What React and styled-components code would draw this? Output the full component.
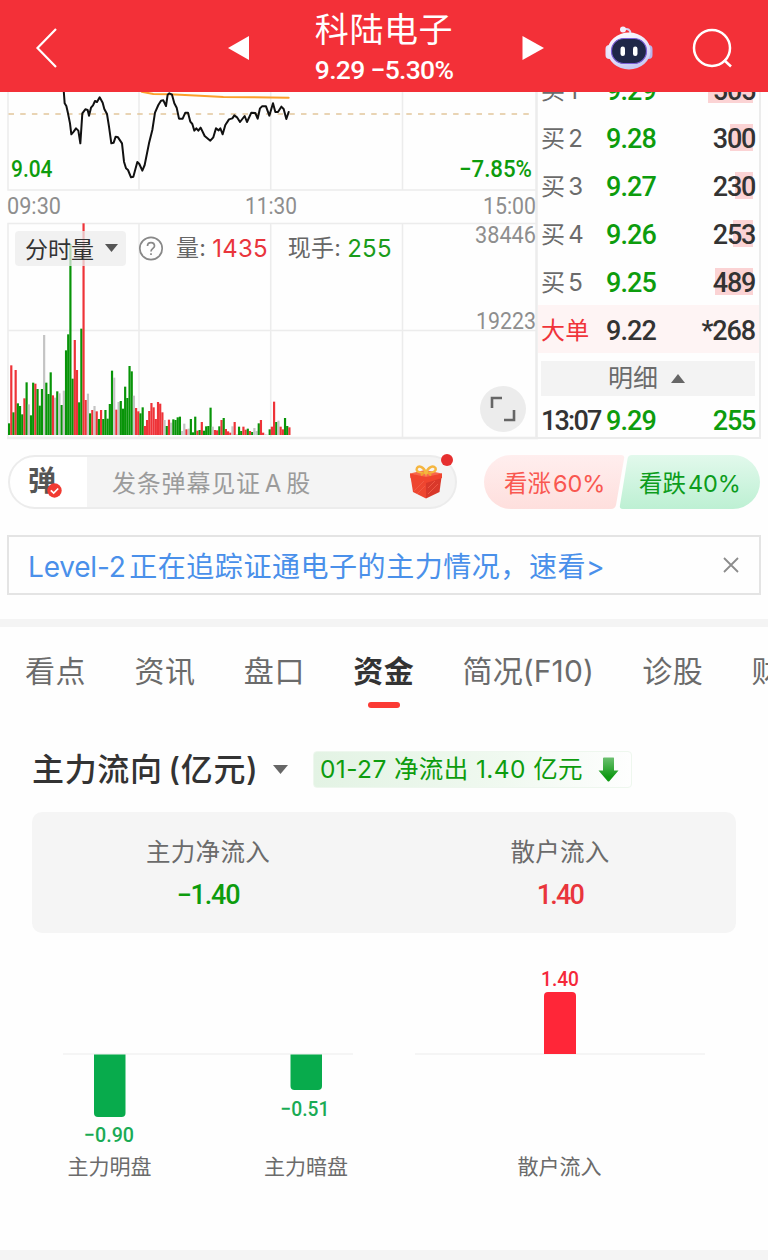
import React from "react";
import styled, { createGlobalStyle } from "styled-components";

const UI = `"Inter", "Noto Sans CJK SC", sans-serif`;
const DIN = `"Roboto", "Noto Sans CJK SC", sans-serif`;
const RED = "#e9353c";
const GREEN = "#0d9c0d";

const GlobalStyle = createGlobalStyle`
  * { box-sizing: border-box; }
  body { margin: 0; background: #fefefe; font-family: ${UI}; color: #333; overflow: hidden; }
  svg { display: block; flex: none; overflow: visible; }
`;

const Page = styled.div`
  width: 768px;
  height: 1260px;
  overflow: hidden;
  display: flex;
  flex-direction: column;
`;

const Num = styled.span`
  font-family: ${DIN};
  font-weight: ${(p) => p.$weight || 500};
  font-size: ${(p) => p.$size || 27}px;
  letter-spacing: ${(p) => p.$ls || 0}px;
  color: ${(p) => p.$color || "inherit"};
  white-space: pre;
`;

/* ---------- header ---------- */

const Header = styled.header`
  position: relative;
  z-index: 1;
  height: 92px;
  flex: none;
  background: #f33038;
  color: #fff;
  display: flex;
  align-items: center;
  padding: 4px 0 0 36px;
`;
const BackIcon = styled.svg`margin-right: 171px;`;
const RobotIcon = styled.svg`margin-left: 61px;`;
const SearchIcon = styled.svg`margin-left: 39px;`;
const TitleBlock = styled.div`
  width: 273px;
  height: 88px;
  display: flex;
  flex-direction: column;
  align-items: center;
  margin-top: -4px;
`;
const StockName = styled.div`
  font-size: 34px;
  letter-spacing: 0.6px;
  line-height: 44px;
  margin-top: 6px;
  padding-right: 3px;
`;
const StockQuote = styled(Num)`
  line-height: 30px;
  margin-top: 3px;
  padding-right: 3px;
`;

/* ---------- market panel ---------- */

const Market = styled.section`
  height: 347px;
  flex: none;
  display: flex;
`;
const ChartPane = styled.div`
  position: relative;
  width: 538px;
`;
const ChartTools = styled.div`
  position: absolute;
  left: 15px;
  top: 138px;
  height: 36px;
  display: flex;
  align-items: center;
  font-size: 23px;
  color: #666;
  white-space: nowrap;
`;
const Picker = styled.div`
  width: 111px;
  height: 35px;
  border-radius: 4px;
  background: rgba(236, 236, 236, 0.75);
  color: #333;
  display: flex;
  align-items: center;
  gap: 11px;
  padding-left: 10px;
  margin-right: 13px;
`;
const Caption = styled.span`
  margin-left: ${(p) => p.$ml}px;
  margin-right: 6px;
  line-height: 35px;
  letter-spacing: 0.3px;
`;
const ToolValue = styled.span`
  color: ${(p) => p.$color};
  font-size: 24px;
  letter-spacing: 0.2px;
`;
const ExpandButton = styled.div`
  position: absolute;
  left: 480px;
  top: 294px;
  width: 46px;
  height: 46px;
  border-radius: 50%;
  background: #ececec;
  display: grid;
  place-items: center;
`;

const Book = styled.div`
  width: 223px;
  border-right: 2px solid #ececec;
  border-bottom: 2px solid #ececec;
  overflow: hidden;
  display: flex;
  flex-direction: column;
`;
const BookRow = styled.div`
  flex: none;
  height: 48px;
  display: grid;
  grid-template-columns: 65px 1fr auto;
  align-items: center;
  padding: 3px 4px 0 3px;
  background: ${(p) => (p.$big ? "#fef4f4" : "transparent")};
  &:first-child { margin-top: -27px; }
`;
const Side = styled.span`
  font-size: 24px;
  margin-top: -5px;
  white-space: pre;
  word-spacing: -4px;
  letter-spacing: 0.2px;
  color: ${(p) => (p.$big ? "#f0343a" : "#6b6b6b")};
`;
const Qty = styled(Num)`
  position: relative;
  text-align: right;
  z-index: 0;
  &::before {
    content: "";
    position: absolute;
    z-index: -1;
    right: 2px;
    top: 1px;
    height: 27px;
    width: ${(p) => p.$bar || 0}px;
    background: #fbd3d4;
  }
`;
const DetailBar = styled.div`
  flex: none;
  height: 35px;
  margin: 8px 4px 0 3px;
  background: #f3f3f3;
  color: #6b6b6b;
  font-size: 25px;
  line-height: 30px;
  display: flex;
  align-items: center;
  justify-content: center;
  gap: 13px;
  padding-right: 3px;
`;
const DetailLabel = styled.span`margin-top: -1px;`;
const TradeRow = styled.div`
  flex: none;
  height: 48px;
  display: grid;
  grid-template-columns: 65px 1fr auto;
  align-items: center;
  padding: 2px 4px 0 3px;
  color: #333;
`;

/* ---------- comments and votes ---------- */

const Social = styled.section`
  height: 54px;
  flex: none;
  margin: 16px 8px 0;
  display: flex;
`;
const Danmu = styled.div`
  position: relative;
  width: 449px;
  height: 54px;
  border: 2px solid #ececec;
  border-radius: 27px;
  background: linear-gradient(90deg, #fff 77px, #f4f4f4 77px);
  display: flex;
  align-items: center;
`;
const DanmuMark = styled.div`
  position: relative;
  width: 102px;
  padding-left: 18px;
  font-size: 28px;
  font-weight: 700;
  line-height: 46px;
  margin-top: -3px;
  color: #555;
`;
const CheckBadge = styled.svg`
  position: absolute;
  left: 37px;
  top: 25px;
`;
const Placeholder = styled.div`
  width: 297px;
  margin-top: -2px;
  font-size: 24px;
  letter-spacing: 0.8px;
  word-spacing: -3.5px;
  color: #9b9b9b;
`;
const AlertDot = styled.i`
  position: absolute;
  left: 431px;
  top: -3px;
  width: 12px;
  height: 12px;
  border-radius: 50%;
  background: #e62f2f;
`;
const Votes = styled.div`
  position: relative;
  margin-left: 27px;
  width: 276px;
  height: 54px;
`;
const VoteShapes = styled.svg`position: absolute; left: 0; top: 0;`;
const VoteLabels = styled.div`
  position: relative;
  display: flex;
  height: 54px;
  align-items: center;
  gap: 7px;
  font-size: 23.5px;
  padding-left: 20px;
`;
const Vote = styled.span`
  width: ${(p) => p.$w}px;
  color: ${(p) => p.$color};
  white-space: nowrap;
`;
const Pct = styled.span`
  font-size: 23.5px;
  margin-left: 2px;
  letter-spacing: -0.1px;
`;

const Notice = styled.section`
  flex: none;
  height: 60px;
  margin: 26px 7px 0;
  border: 2px solid #e4e4e4;
  display: flex;
  align-items: center;
  justify-content: space-between;
  padding: 0 20px 0 19px;
  font-size: 28px;
  letter-spacing: 0.55px;
  color: #4a90ea;
  white-space: nowrap;
`;
const NoticeText = styled.span`margin-top: -1px;`;
const NoticeProduct = styled.span`
  letter-spacing: -0.2px;
  word-spacing: -4px;
`;
const Band = styled.div`
  flex: none;
  height: ${(p) => p.$h}px;
  margin-top: ${(p) => p.$mt}px;
  background: #f4f4f4;
`;

/* ---------- tabs ---------- */

const Tabs = styled.nav`
  flex: none;
  height: 88px;
  display: flex;
  gap: 48.2px;
  padding-left: 25px;
  overflow: hidden;
`;
const Tab = styled.div`
  flex: none;
  height: 82px;
  display: flex;
  flex-direction: column;
  align-items: center;
  font-size: 30px;
  line-height: 44px;
  padding-top: 22px;
  letter-spacing: ${(p) => (p.$latin ? 0.1 : 0.6)}px;
  font-weight: ${(p) => (p.$active ? 700 : 400)};
  color: ${(p) => (p.$active ? "#333" : "#6b6b6b")};
  &::after {
    content: "";
    flex: none;
    width: 32px;
    height: 6px;
    margin-top: 9px;
    border-radius: 3px;
    background: ${(p) => (p.$active ? "#fb3a34" : "transparent")};
  }
`;

/* ---------- fund flow ---------- */

const FlowHead = styled.div`
  flex: none;
  height: 38px;
  margin: 35px 0 0 32px;
  display: flex;
  align-items: center;
`;
const FlowTitle = styled.h2`
  margin: 0;
  width: 241px;
  font-size: 32px;
  line-height: 38px;
  letter-spacing: 0.65px;
  word-spacing: -3.5px;
  font-weight: 500;
  white-space: nowrap;
  padding-top: 2px;
`;
const FlowTag = styled.div`
  margin-left: 25px;
  width: 319px;
  height: 37px;
  border: 1px solid #eef7ee;
  border-radius: 4px;
  background: linear-gradient(90deg, #e3f3e4, #f0f9f0 60%, #fefefe);
  color: ${GREEN};
  font-size: 24.5px;
  letter-spacing: 0.4px;
  padding: 0 12px 0 6px;
  display: flex;
  align-items: center;
  justify-content: space-between;
  white-space: nowrap;
`;
const FlowTagText = styled.span`
  line-height: 32px;
`;
const Summary = styled.div`
  flex: none;
  height: 121px;
  margin: 24px 32px 0;
  border-radius: 10px;
  background: #f5f5f5;
  display: grid;
  grid-template-columns: 1fr 1fr;
`;
const Metric = styled.div`
  display: flex;
  flex-direction: column;
  align-items: center;
  padding-top: 22px;
  font-size: 24.5px;
  line-height: 36px;
  letter-spacing: 0.3px;
  color: #6b6b6b;
`;
const MetricValue = styled(Num)`
  line-height: 34px;
  margin-top: 8px;
`;
const FlowChart = styled.svg`
  margin-top: 27px;
`;

/* ---------- data ---------- */

const VOLUME =
  "g35 r209 g68 r195 g95 g87 g62 r110 g158 n92 g59 g157 r154 g138 g88 g138 n300 g157 g123 g188 r119 n112 g131 n125 g90 n133 g254 g302 g573 g169 r285 r195 g98 g319 r635 r105 n124 g65 r75 n87 r71 g48 r75 g48 g75 g49 g93 g193 n172 r76 n99 g102 g79 g145 g111 g207 g191 n118 r81 r71 g65 g83 r27 r45 r72 r96 r83 r48 r99 r94 r68 n45 g27 r46 n37 g47 g45 g53 g55 n12 n34 r17 n19 g48 g8 g55 r13 g15 r39 g13 g26 g27 g82 n25 r15 r14 g26 r45 g51 r18 r11 r7 n26 r39 n2 g25 g12 r25 r16 g19 r12 g9 n21 n12 g35 r45 r7 n2 n1 g17 r25 r100 g39 n43 r25 r17 g51 g27 r23"
    .split(" ")
    .map((s) => ({ tone: s[0], value: Number(s.slice(1)) }));
const TONES = { g: "#089408", r: "#ee3338", n: "#c4c4c4" };

const PRICE =
  "191,0 194,40 199,48 204,70 210,100 214,133 221,125 228,115 235,122 241,160 247,70 256,58 263,60 267,77 273,53 279,46 285,33 291,36 299,22 308,38 313,57 321,72 327,110 334,160 341,158 347,140 354,142 366,160 372,215 378,235 384,240 393,262 400,260 412,216 418,222 427,242 434,225 447,160 457,120 465,68 475,45 483,32 490,31 498,48 503,14 508,10 516,14 523,40 530,53 537,86 548,86 556,68 564,68 571,95 577,102 583,122 589,115 595,122 602,113 614,138 631,152 640,142 648,115 656,121 661,115 668,133 676,105 687,88 697,85 703,76 711,82 720,96 734,78 741,96 754,68 766,69 773,86 780,55 786,49 798,49 808,77 819,40 826,66 834,66 844,50 851,57 859,87 866,66";
const AVERAGE = "425,5 460,12 510,13 600,17 670,21 760,22 866,23";

const BIDS = [
  { side: "买 1", price: "9.29", qty: "505", bar: 45 },
  { side: "买 2", price: "9.28", qty: "300", bar: 23 },
  { side: "买 3", price: "9.27", qty: "230", bar: 18 },
  { side: "买 4", price: "9.26", qty: "253", bar: 20 },
  { side: "买 5", price: "9.25", qty: "489", bar: 38 },
];

const TABS = ["看点", "资讯", "盘口", "资金", "简况(F10)", "诊股", "财务"];

/* ---------- drawings ---------- */

function ChartText({ x, y, w, size = 24, color = "#8e8e8e", weight = 400, children }) {
  return (
    <text x={x} y={y} textLength={w} lengthAdjust="spacingAndGlyphs" fontFamily="Roboto, sans-serif" fontSize={size} fontWeight={weight} fill={color}>
      {children}
    </text>
  );
}

function IntradayChart() {
  return (
    <svg width="538" height="347" viewBox="0 0 538 347">
      <g stroke="#ececec" strokeWidth="1.5" fill="none">
        <path d="M8 0V98H537M139 0V98M270.7 0V98M402.5 0V98" />
        <path d="M537 131.5H8V346M139 132V345M270.7 132V345M402.5 132V345M8 238.5H537" />
        <path d="M7 346H538M536.5 0V347" strokeWidth="2.5" />
      </g>
      <path d="M8.500 22H535" stroke="#e2c69c" strokeWidth="1.3" strokeDasharray="5.500 6.200" />
      {VOLUME.map((bar, i) => (
        <rect key={i} x={8 + i * 2.19} y={343 - bar.value / 3} width="2.19" height={bar.value / 3} fill={TONES[bar.tone]} />
      ))}
      <g transform="translate(0 -2) scale(0.33333)" fill="none" strokeLinejoin="round" strokeLinecap="round">
        <polyline points={AVERAGE} stroke="#fba02c" strokeWidth="6" />
        <polyline points={PRICE} stroke="#111" strokeWidth="6" />
      </g>
      <ChartText x={11} y={85} w={41.5} weight={500} color={GREEN}>9.04</ChartText>
      <ChartText x={459} y={85} w={73} weight={500} color={GREEN}>−7.85%</ChartText>
      <ChartText x={7} y={122} w={54}>09:30</ChartText>
      <ChartText x={245} y={122} w={52}>11:30</ChartText>
      <ChartText x={483} y={122} w={53}>15:00</ChartText>
      <ChartText x={475} y={151} w={61}>38446</ChartText>
      <ChartText x={476} y={237} w={60}>19223</ChartText>
    </svg>
  );
}

function Robot() {
  return (
    <RobotIcon width="48" height="46" viewBox="0 0 48 46">
      <defs>
        <linearGradient id="shell" x1="0" y1="0" x2="0.4" y2="1">
          <stop offset="0" stopColor="#fff" />
          <stop offset="0.65" stopColor="#e4e0fa" />
          <stop offset="1" stopColor="#c9ccf2" />
        </linearGradient>
      </defs>
      <path d="M18.500 4.500C23 3 25.500 5 25.500 9" fill="none" stroke="#d9d6f4" strokeWidth="2" />
      <circle cx="18" cy="4.500" r="3" fill="#f2effd" />
      <rect x="0.500" y="20" width="8" height="14" rx="4" fill="#e6e3fb" />
      <rect x="39.500" y="20" width="8" height="14" rx="4" fill="#b9b4ea" />
      <ellipse cx="24" cy="26" rx="21.500" ry="18.500" fill="url(#shell)" />
      <rect x="6.500" y="13.500" width="35" height="25" rx="12.300" fill="#1f2748" stroke="#7a5fd6" strokeWidth="1.200" />
      <rect x="15.500" y="21.500" width="4.500" height="9.500" rx="2.200" fill="#fff" />
      <rect x="28" y="21.500" width="4.500" height="9.500" rx="2.200" fill="#fff" />
    </RobotIcon>
  );
}

function Gift() {
  return (
    <svg width="34" height="36" viewBox="0 0 34 36">
      <path d="M1 9.500L17 13V34.500L4 28Z" fill="#ee4630" />
      <path d="M33 9.500L17 13V34.500L30.500 28Z" fill="#d9382a" />
      <path d="M1 9.500L16 6L33 9.500L17 14Z" fill="#f8674b" />
      <path d="M1 9.500L17 13L33 9.500V14L17 19L1.500 14Z" fill="#f0452f" />
      <path d="M5 27L15 17M8 30L16 22M19 30L29 20M19 24L26 17" stroke="#f3604a" strokeWidth="0.800" />
      <path d="M17 9C12 9 6 8 8 4C10 1 15 3 17 9C19 3 24 1 26.500 4C28 8 22 9 17 9Z" fill="none" stroke="#f5b640" strokeWidth="2.400" />
      <path d="M15 8.500L12 11.500M19 8.500L22 11.500" stroke="#f0a52f" strokeWidth="2" />
    </svg>
  );
}

function Triangle({ w = 14, h = 9, up, color = "#666" }) {
  return (
    <svg width={w} height={h} viewBox="0 0 14 9" preserveAspectRatio="none">
      <path d={up ? "M0 9H14L7 0Z" : "M0 0H14L7 9Z"} fill={color} />
    </svg>
  );
}

function FlowBars() {
  return (
    <FlowChart width="768" height="290" viewBox="0 960 768 290">
      <path d="M63 1054H353M415 1054H705" stroke="#ececec" strokeWidth="1.200" />
      <path d="M94 1054.500h31.500V1113a4 4 0 0 1-4 4h-23.500a4 4 0 0 1-4-4Z" fill="#08ab4c" />
      <path d="M290.500 1054.500H322V1086a4 4 0 0 1-4 4h-23.500a4 4 0 0 1-4-4Z" fill="#08ab4c" />
      <path d="M544 1054V996a4 4 0 0 1 4-4h24a4 4 0 0 1 4 4v58Z" fill="#ff2638" />
      <ChartText x={84} y={1142} w={50} size={21} weight={500} color="#1aab55">−0.90</ChartText>
      <ChartText x={280.5} y={1115.500} w={49} size={21} weight={500} color="#1aab55">−0.51</ChartText>
      <ChartText x={541} y={986} w={38} size={21} weight={500} color="#f5283a">1.40</ChartText>
      <g fontFamily='"Noto Sans CJK SC", sans-serif' fontSize="21" fill="#6b6b6b" textAnchor="middle">
        <text x="109.500" y="1173.500">主力明盘</text>
        <text x="306" y="1173.500">主力暗盘</text>
        <text x="559.500" y="1173.500">散户流入</text>
      </g>
    </FlowChart>
  );
}

/* ---------- page ---------- */

export default function App() {
  return (
    <Page>
      <GlobalStyle />
      <Header>
        <BackIcon width="21" height="40" viewBox="0 0 21 40">
          <path d="M20 1L1.500 20L20 39" fill="none" stroke="#fff" strokeWidth="2.200" />
        </BackIcon>
        <svg width="21" height="24" viewBox="0 0 21 24"><path d="M21 0V24L0 12Z" fill="#fff" /></svg>
        <TitleBlock>
          <StockName>科陆电子</StockName>
          <StockQuote $size={26.5} $ls={-0.7}>9.29 −5.30%</StockQuote>
        </TitleBlock>
        <svg width="22" height="24" viewBox="0 0 22 24"><path d="M0.500 0V24L22 12Z" fill="#fff" /></svg>
        <Robot />
        <SearchIcon width="40" height="40" viewBox="0 0 40 40">
          <circle cx="20" cy="20" r="18" fill="none" stroke="#fff" strokeWidth="2.500" />
          <path d="M32 32L39 38.500" stroke="#fff" strokeWidth="2.500" />
        </SearchIcon>
      </Header>

      <Market>
        <ChartPane>
          <IntradayChart />
          <ChartTools>
            <Picker>
              分时量
              <Triangle w={13} h={8} color="#555" />
            </Picker>
            <svg width="25" height="25" viewBox="0 0 25 25">
              <circle cx="12" cy="12.500" r="11.200" fill="none" stroke="#888" strokeWidth="1.700" />
              <path d="M8.500 10C8.500 5.500 15.500 5.500 15.500 10C15.500 12.500 12 12.300 12 15.500M12 17.300V19" fill="none" stroke="#888" strokeWidth="1.700" />
            </svg>
            <Caption $ml={12}>量:</Caption>
            <ToolValue $color={RED}>1435</ToolValue>
            <Caption $ml={20}>现手:</Caption>
            <ToolValue $color="#1a9c1a">255</ToolValue>
          </ChartTools>
          <ExpandButton>
            <svg width="26" height="26" viewBox="0 0 26 26">
              <path d="M2 12V2H12M24 14V24H14" fill="none" stroke="#666" strokeWidth="2.600" />
            </svg>
          </ExpandButton>
        </ChartPane>
        <Book>
          {BIDS.map((bid) => (
            <BookRow key={bid.side}>
              <Side>{bid.side}</Side>
              <Num $color={GREEN} $ls={-0.9}>{bid.price}</Num>
              <Qty $bar={bid.bar} $ls={-1.3} $color="#333">{bid.qty}</Qty>
            </BookRow>
          ))}
          <BookRow $big>
            <Side $big>大单</Side>
            <Num $color="#333" $ls={-0.9}>9.22</Num>
            <Qty $ls={-1.1} $color="#333">*268</Qty>
          </BookRow>
          <DetailBar>
            <DetailLabel>明细</DetailLabel>
            <Triangle up />
          </DetailBar>
          <TradeRow>
            <Num $ls={-1.8}>13:07</Num>
            <Num $color={GREEN} $ls={-0.9}>9.29</Num>
            <Num $color={GREEN} $ls={-1.3}>255</Num>
          </TradeRow>
        </Book>
      </Market>

      <Social>
        <Danmu>
          <DanmuMark>
            弹
            <CheckBadge width="15" height="15" viewBox="0 0 15 15">
              <circle cx="7.500" cy="7.500" r="7.200" fill="#f13a31" />
              <path d="M3.800 7.300L6.700 10L11.200 5.500" fill="none" stroke="#fff" strokeWidth="1.700" />
            </CheckBadge>
          </DanmuMark>
          <Placeholder>发条弹幕见证 A 股</Placeholder>
          <Gift />
          <AlertDot />
        </Danmu>
        <Votes>
          <VoteShapes width="276" height="54" viewBox="0 0 276 54">
            <defs>
              <linearGradient id="up" x1="0" y1="0" x2="0" y2="1">
                <stop offset="0" stopColor="#ffeeee" />
                <stop offset="1" stopColor="#fedfdd" />
              </linearGradient>
              <linearGradient id="down" x1="0" y1="0" x2="0" y2="1">
                <stop offset="0" stopColor="#e2f9ec" />
                <stop offset="1" stopColor="#bdf0d3" />
              </linearGradient>
            </defs>
            <path d="M27 0H137Q141 0 140 4L132 50Q131 54 127 54H27A27 27 0 0 1 27 0Z" fill="url(#up)" />
            <path d="M148 0H249A27 27 0 0 1 249 54H139Q135 54 136 50L143.500 4Q144 0 148 0Z" fill="url(#down)" />
          </VoteShapes>
          <VoteLabels>
            <Vote $w={128} $color="#f95750">看涨<Pct>60%</Pct></Vote>
            <Vote $w={110} $color="#0d9c1c">看跌<Pct>40%</Pct></Vote>
          </VoteLabels>
        </Votes>
      </Social>

      <Notice>
        <NoticeText>
          <NoticeProduct>Level-2 </NoticeProduct>
          正在追踪证通电子的主力情况，速看&gt;
        </NoticeText>
        <svg width="16" height="16" viewBox="0 0 16 16"><path d="M1 1L15 15M15 1L1 15" stroke="#8c8c8c" strokeWidth="1.800" /></svg>
      </Notice>
      <Band $h={8} $mt={24} />

      <Tabs>
        {TABS.map((tab, i) => (
          <Tab key={tab} $active={i === 3} $latin={i === 4}>{tab}</Tab>
        ))}
      </Tabs>

      <FlowHead>
        <FlowTitle>主力流向 (亿元)</FlowTitle>
        <Triangle w={15} h={9} />
        <FlowTag>
          <FlowTagText>01-27 净流出 1.40 亿元</FlowTagText>
          <svg width="21" height="25" viewBox="0 0 21 25">
            <defs>
              <linearGradient id="drop" x1="0" y1="0" x2="0" y2="1">
                <stop offset="0" stopColor="#6cc070" />
                <stop offset="0.800" stopColor="#109a14" />
              </linearGradient>
            </defs>
            <path d="M6 0.500H15.500Q16 0.500 16 1V13.500H20.500L11.500 24Q10.500 25 9.500 24L0.500 13.500H5V1Q5 0.500 6 0.500Z" fill="url(#drop)" />
          </svg>
        </FlowTag>
      </FlowHead>
      <Summary>
        <Metric>
          主力净流入
          <MetricValue $color={GREEN} $ls={-1.2}>−1.40</MetricValue>
        </Metric>
        <Metric>
          散户流入
          <MetricValue $color={RED} $ls={-1.8}>1.40</MetricValue>
        </Metric>
      </Summary>
      <FlowBars />
      <Band $h={11} $mt={0} />
    </Page>
  );
}
